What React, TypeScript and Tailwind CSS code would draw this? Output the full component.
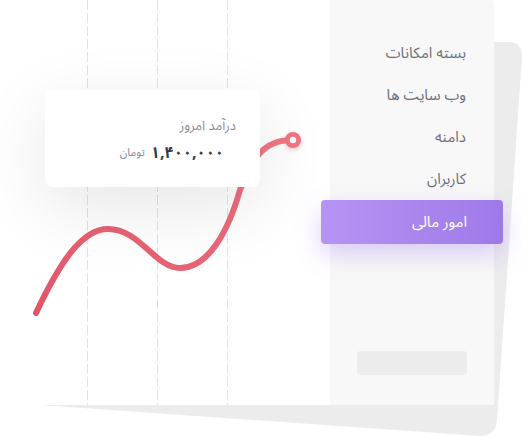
import React from 'react'

const menu = ['بسته امکانات', 'وب سایت ها', 'دامنه', 'کاربران']

function Chart() {
  return (
    <svg className="absolute inset-0" width="330" height="405" viewBox="0 0 330 405">
      <defs>
        <linearGradient id="curve" x1="0" y1="1" x2="1" y2="0">
          <stop offset="0" stopColor="#e05568" />
          <stop offset="1" stopColor="#f27784" />
        </linearGradient>
        <filter id="dotShadow" x="-50%" y="-50%" width="200%" height="200%">
          <feDropShadow dx="0" dy="2" stdDeviation="2" floodColor="#e05568" floodOpacity="0.3" />
        </filter>
      </defs>
      {[87.5, 157.5, 227.5].map(x => (
        <line key={x} x1={x} y1="0" x2={x} y2="405" stroke="#e3e3e3" strokeWidth="1" strokeDasharray="10 3" />
      ))}
      <path
        d="M36 313 C60 262 82 229 108 229 C140 229 155 268 180 268 C208 268 228 232 240 190 C252 160 262 140 292 140"
        fill="none"
        stroke="url(#curve)"
        strokeWidth="6"
        strokeLinecap="round"
      />
      <circle cx="293" cy="140" r="8" fill="#f07482" filter="url(#dotShadow)" />
      <circle cx="293" cy="140" r="3.2" fill="#ffffff" />
    </svg>
  )
}

export default function App() {
  return (
    <div className="relative w-[522px] h-[436px] bg-white overflow-hidden font-['Noto_Sans_Arabic','DejaVu_Sans',sans-serif]">
      <svg className="absolute inset-0" width="522" height="436" viewBox="0 0 522 436">
        <path d="M494 42 L509 42 Q522 42 522 57 L497 420 Q496 436 480 436 L40 405 L494 405 Z" fill="#ececec" />
      </svg>

      <div className="relative flex w-[494px] h-[405px] bg-white rounded-br-[4px]">
        <div className="relative w-[330px] h-full">
          <Chart />
          <div
            dir="rtl"
            className="absolute left-[45px] top-[90px] w-[215px] h-[97px] bg-white rounded-[8px] shadow-[0_20px_70px_rgba(0,0,0,0.1)] pr-[24px] pt-[27px]"
          >
            <div className="h-[18px] text-[13px] leading-[18px] text-[#8b8b95]">درآمد امروز</div>
            <div className="flex items-center gap-[6px] mt-[8px] h-[20px] pr-[12px]">
              <span className="text-[16px] leading-[20px] font-bold text-[#3b3b47]">۱,۴۰۰,۰۰۰</span>
              <span className="text-[11px] leading-[20px] text-[#8b8b95]">تومان</span>
            </div>
          </div>
        </div>

        <div dir="rtl" className="flex flex-col w-[164px] h-full bg-[#f8f8f8] rounded-tr-[4px] rounded-br-[4px] pt-[32px] pb-[30px]">
          {menu.map(m => (
            <div key={m} className="h-[42px] flex items-center pr-[28px] text-[15px] text-[#6e6e7c]">
              {m}
            </div>
          ))}
          <div className="h-[44px] -mx-[9px] flex items-center pr-[36px] rounded-[4px] bg-[linear-gradient(to_left,#9d7ae8,#b794f4)] text-white text-[15px] shadow-[0_10px_24px_rgba(160,120,240,0.35)]">
            امور مالی
          </div>
          <div className="mt-auto mx-[27px] h-[24px] rounded-[4px] bg-[#ececec]" />
        </div>
      </div>
    </div>
  )
}
